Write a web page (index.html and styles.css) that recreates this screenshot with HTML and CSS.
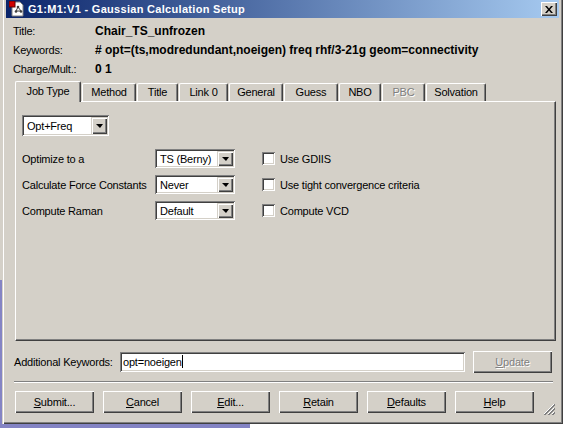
FILE: index.html
```html
<!DOCTYPE html>
<html lang="en">
<head>
    <meta charset="UTF-8">
    <title>Gaussian Calculation Setup</title>
    <link rel="stylesheet" href="styles.css">
</head>
<body>
    <div class="window">
        <div class="titlebar">
            <svg class="app-icon" width="16" height="16" viewBox="0 0 16 16">
                <path d="M3 1h8l3 3v11H3z" fill="#fff" stroke="#808080"/>
                <rect x="0" y="0" width="6" height="6" fill="#d00000" stroke="#600000"/>
                <path d="M9 6L7 10M9 6l3 4M7 10h5" stroke="#404040" fill="none"/>
                <circle cx="9" cy="6" r="1.3" fill="#404040"/>
                <circle cx="7" cy="10.5" r="1.3" fill="#404040"/>
                <circle cx="12" cy="10.5" r="1.3" fill="#404040"/>
            </svg>
            <span class="caption">G1:M1:V1 - Gaussian Calculation Setup</span>
            <div class="close-btn">
                <svg width="8" height="7" viewBox="0 0 8 7">
                    <path d="M0 0h2l2 2.5L6 0h2L5 3.5 8 7H6L4 4.5 2 7H0l3-3.5z" fill="#000"/>
                </svg>
            </div>
        </div>

        <div class="client">
            <div class="info">
                <span class="info-label">Title:</span>
                <span class="info-value">Chair_TS_unfrozen</span>
                <span class="info-label">Keywords:</span>
                <span class="info-value"># opt=(ts,modredundant,noeigen) freq rhf/3-21g geom=connectivity</span>
                <span class="info-label">Charge/Mult.:</span>
                <span class="info-value">0 1</span>
            </div>

            <div class="tabs">
                <div class="tab active">Job Type</div>
                <div class="tab">Method</div>
                <div class="tab">Title</div>
                <div class="tab">Link 0</div>
                <div class="tab">General</div>
                <div class="tab">Guess</div>
                <div class="tab">NBO</div>
                <div class="tab disabled">PBC</div>
                <div class="tab">Solvation</div>
            </div>

            <div class="panel">
                <div class="combo combo-job">
                    <span class="combo-text">Opt+Freq</span>
                    <span class="combo-btn"><i class="arrow"></i></span>
                </div>

                <div class="options">
                    <div class="opt-row">
                        <span class="opt-label">Optimize to a</span>
                        <div class="combo combo-opt">
                            <span class="combo-text">TS (Berny)</span>
                            <span class="combo-btn"><i class="arrow"></i></span>
                        </div>
                        <label class="check"><span class="box"></span>Use GDIIS</label>
                    </div>
                    <div class="opt-row">
                        <span class="opt-label">Calculate Force Constants</span>
                        <div class="combo combo-opt">
                            <span class="combo-text">Never</span>
                            <span class="combo-btn"><i class="arrow"></i></span>
                        </div>
                        <label class="check"><span class="box"></span>Use tight convergence criteria</label>
                    </div>
                    <div class="opt-row">
                        <span class="opt-label">Compute Raman</span>
                        <div class="combo combo-opt">
                            <span class="combo-text">Default</span>
                            <span class="combo-btn"><i class="arrow"></i></span>
                        </div>
                        <label class="check"><span class="box"></span>Compute VCD</label>
                    </div>
                </div>
            </div>

            <div class="keywords-row">
                <span class="kw-label">Additional Keywords:</span>
                <div class="text-input">opt=noeigen<span class="caret"></span></div>
                <div class="btn btn-update disabled"><u>U</u>pdate</div>
            </div>

            <div class="separator"></div>

            <div class="button-row">
                <div class="btn"><u>S</u>ubmit...</div>
                <div class="btn"><u>C</u>ancel</div>
                <div class="btn"><u>E</u>dit...</div>
                <div class="btn"><u>R</u>etain</div>
                <div class="btn"><u>D</u>efaults</div>
                <div class="btn"><u>H</u>elp</div>
                <svg class="grip" width="12" height="12" viewBox="0 0 12 12">
                    <path d="M11 1L1 11M11 5L5 11M11 9L9 11" stroke="#fff"/>
                    <path d="M12 1L1 12M12 2L2 12M12 5L5 12M12 6L6 12M12 9L9 12M12 10L10 12" stroke="#808080"/>
                </svg>
            </div>
        </div>
    </div>
</body>
</html>
```

FILE: styles.css
```css
* {
    box-sizing: border-box;
}
body {
    margin: 0;
    width: 566px;
    height: 428px;
    overflow: hidden;
    font-family: 'Liberation Sans', Arial, sans-serif;
    font-size: 11px;
    letter-spacing: -0.2px;
    color: #000;
    background:
        linear-gradient(#d4d0c8 0, #d4d0c8 280px, #8484c4 280px) left top / 2px 100% no-repeat,
        linear-gradient(to right, #8484c4 0, #8484c4 250px, #ffffff 250px);
}

/* dialog frame (top edge is off-screen) */
.window {
    margin-left: 2px;
    width: 561px;
    background-color: #d4d0c8;
    padding: 0 4px 4px 4px;
    box-shadow: inset 1px 0 #d4d0c8, inset 2px 0 #fff,
                inset -1px -1px #404040, inset -2px -2px #808080;
}
.titlebar {
    height: 18px;
    display: flex;
    align-items: center;
    padding: 0 2px 0 3px;
    background: linear-gradient(to right, #0a246a, #a6caf0);
    color: #fff;
}
.app-icon {
    flex-shrink: 0;
    margin-right: 3px;
}
.caption {
    font-weight: bold;
    font-size: 11px;
    letter-spacing: 0.3px;
    flex-grow: 1;
}
.close-btn {
    width: 16px;
    height: 14px;
    display: flex;
    align-items: center;
    justify-content: center;
    background-color: #d4d0c8;
    box-shadow: inset 1px 1px #fff, inset -1px -1px #404040, inset -2px -2px #808080;
}

.client {
    padding: 0 3px 7px 7px;
}
.info {
    display: grid;
    grid-template-columns: 82px auto;
    grid-auto-rows: 19px;
    align-items: center;
    padding-top: 3px;
}
.info-value {
    font-weight: bold;
    font-size: 12px;
    letter-spacing: 0;
}

/* tab strip: widths follow the captions of the original dialog */
.tabs {
    display: grid;
    grid-template-columns: 67px 55px 42px 50px 55px 55px 43px 44px 61px;
    align-items: end;
    margin: 3px 0 0 2px;
    height: 20px;
    position: relative;
    z-index: 1;
}
.tab {
    height: 18px;
    line-height: 17px;
    text-align: center;
    margin-right: 1px;
    border-top: 1px solid #fff;
    border-left: 1px solid #fff;
    border-right: 1px solid #404040;
    box-shadow: inset -1px 0 #808080;
    border-radius: 2px 2px 0 0;
}
.tab.active {
    height: 21px;
    margin-bottom: -1px;
    background-color: #d4d0c8;
    line-height: 18px;
}
.tab.disabled,
.btn.disabled {
    color: #808080;
    text-shadow: 1px 1px #fff;
}

.panel {
    margin-left: 2px;
    height: 240px;
    border-top: 1px solid #fff;
    border-left: 1px solid #fff;
    border-right: 1px solid #404040;
    border-bottom: 1px solid #404040;
    box-shadow: inset -1px -1px #808080;
    padding: 13px 6px;
}

/* drop-down lists */
.combo {
    display: flex;
    align-items: center;
    background-color: #fff;
    padding: 2px;
    box-shadow: inset 1px 1px #808080, inset -1px -1px #fff,
                inset 2px 2px #404040, inset -2px -2px #d4d0c8;
}
.combo-text {
    flex-grow: 1;
    padding-left: 3px;
}
.combo-btn {
    width: 16px;
    height: 100%;
    display: flex;
    align-items: center;
    justify-content: center;
    background-color: #d4d0c8;
    box-shadow: inset 1px 1px #d4d0c8, inset 2px 2px #fff,
                inset -1px -1px #404040, inset -2px -2px #808080;
}
.arrow {
    width: 0;
    height: 0;
    border-left: 4px solid transparent;
    border-right: 3px solid transparent;
    border-top: 4px solid #000;
    margin-top: 1px;
}
.combo-job {
    width: 87px;
    height: 21px;
}
.combo-opt {
    width: 80px;
    height: 19px;
    margin-right: 27px;
}

.options {
    margin-top: 13px;
    display: flex;
    flex-direction: column;
    gap: 7px;
}
.opt-row {
    display: flex;
    align-items: center;
}
.opt-label {
    width: 133px;
}
.check {
    display: flex;
    align-items: center;
}
.box {
    width: 13px;
    height: 13px;
    margin-right: 5px;
    background-color: #fff;
    box-shadow: inset 1px 1px #808080, inset -1px -1px #fff,
                inset 2px 2px #404040, inset -2px -2px #d4d0c8;
}

/* bottom of the dialog */
.keywords-row {
    display: flex;
    align-items: center;
    margin: 10px 0 0 1px;
    height: 22px;
}
.kw-label {
    width: 106px;
}
.text-input {
    width: 345px;
    height: 20px;
    line-height: 16px;
    padding: 2px 3px;
    background-color: #fff;
    box-shadow: inset 1px 1px #808080, inset -1px -1px #fff,
                inset 2px 2px #404040, inset -2px -2px #d4d0c8;
}
.caret {
    display: inline-block;
    width: 1px;
    height: 13px;
    background-color: #000;
    vertical-align: -2px;
}
.btn {
    width: 79px;
    height: 22px;
    line-height: 22px;
    text-align: center;
    background-color: #d4d0c8;
    box-shadow: inset 1px 1px #fff, inset -1px -1px #404040, inset -2px -2px #808080;
}
.btn-update {
    margin-left: 8px;
}
.separator {
    margin: 8px 3px 0 1px;
    height: 2px;
    border-top: 1px solid #808080;
    border-bottom: 1px solid #fff;
}
.button-row {
    display: flex;
    align-items: flex-end;
    gap: 9px;
    margin: 8px 0 0 2px;
}
.grip {
    margin-left: auto;
    margin-right: 1px;
    margin-bottom: -2px;
}
```
